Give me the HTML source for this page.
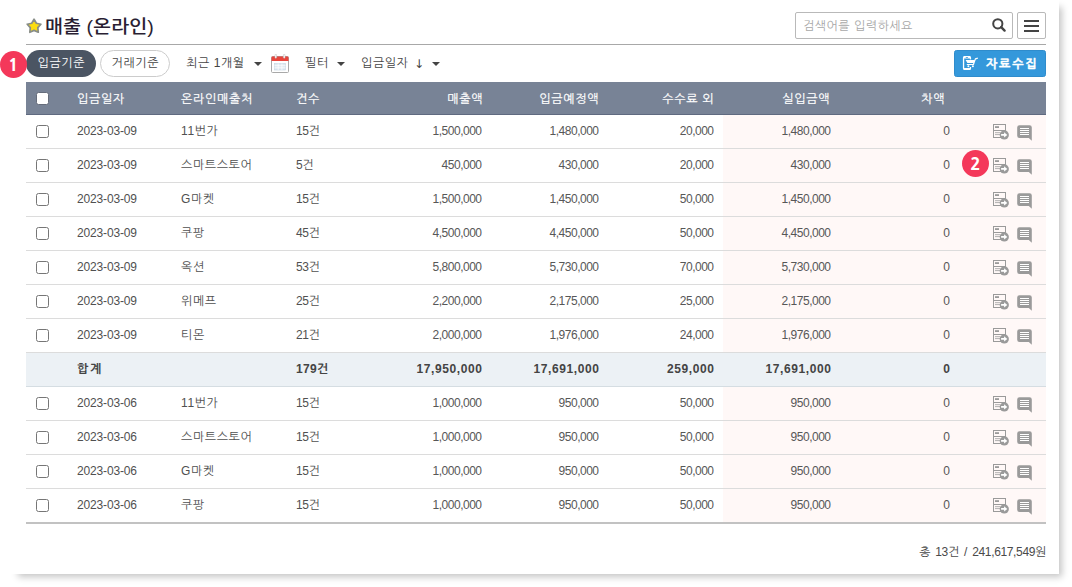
<!DOCTYPE html>
<html lang="ko"><head><meta charset="utf-8"><title>매출 (온라인)</title>
<style>
*{box-sizing:border-box;margin:0;padding:0}
html,body{width:1072px;height:587px;overflow:hidden;background:#fff}
body{position:relative;font-family:"Liberation Sans","NanumGothic",sans-serif;font-size:12px;color:#444}
.shade{position:absolute;left:15px;top:4px;width:1044px;height:570px;background:#fff;box-shadow:3px 3px 7px rgba(0,0,0,.23)}
.card{position:absolute;left:0;top:0;width:1059px;height:574px;background:#fff}
.abs{position:absolute}
.title{position:absolute;left:45px;top:15px;height:24px;line-height:24px;font-size:18px;font-weight:500;color:#2a1f33;white-space:nowrap;transform:scaleX(1.09);transform-origin:0 0;font-family:"Liberation Sans","Noto Sans CJK KR",sans-serif}
.star{position:absolute;left:25px;top:17px}
.search{position:absolute;left:795px;top:12px;width:218px;height:27px;border:1px solid #b9b9b9;border-radius:2px;background:#fff}
.search span{letter-spacing:.5px;position:absolute;left:7px;top:0;line-height:27px;color:#a8a8a8;font-size:12px;white-space:nowrap}
.search svg{position:absolute;left:195px;top:4px}
.menu{position:absolute;left:1017px;top:12px;width:29px;height:27px;border:1px solid #b9b9b9;border-radius:2px;background:#fff}
.menu i{position:absolute;left:6px;width:15px;height:2px;background:#444}
.hr{position:absolute;left:26px;top:44px;width:1020px;height:1px;background:#a8a8a8}
.pill{position:absolute;top:50px;height:27px;line-height:26px;border-radius:14px;text-align:center;font-size:12px;white-space:nowrap;letter-spacing:.6px;text-indent:.6px}
.p1{left:26px;width:70px;background:#4b5563;color:#fff}
.p2{left:100px;width:70px;background:#fff;color:#444;border:1px solid #ccc;line-height:24px}
.tl{position:absolute;top:50px;height:27px;line-height:27px;font-size:12px;color:#444;white-space:nowrap;letter-spacing:.6px}
.caret{position:absolute;top:62px;width:0;height:0;border-left:4px solid transparent;border-right:4px solid transparent;border-top:4px solid #444}
.cal{position:absolute;left:271px;top:54px}
.btn{position:absolute;left:954px;top:50px;width:92px;height:27px;border-radius:2.5px;background:#3498db;border:1px solid #2f8ccc;color:#fff}
.btn span{position:absolute;left:31px;top:0;line-height:27px;-webkit-text-stroke:.35px #fff;font-weight:bold;font-size:12px;white-space:nowrap;letter-spacing:1.8px}
.btn svg{position:absolute;left:7px;top:4px}
.thead{position:absolute;left:26px;top:82px;width:1020px;height:33px;background:#788396;border-bottom:1px solid #5f6a80;color:#fff}
.thead span{position:absolute;top:0;line-height:35px;font-size:12px;white-space:nowrap;letter-spacing:.7px;margin-right:-1.2px;-webkit-text-stroke:.2px #fff}
.thead .hcb{position:absolute;left:10px;top:10px;width:13px;height:13px;background:#fff;border:1px solid #656c7b;border-radius:2.5px}
.tbody{position:absolute;left:26px;top:0;width:1020px}
.row{position:absolute;left:0;width:1020px;height:34px;border-bottom:1px solid #dcdcdc;line-height:33px;white-space:nowrap;color:#505050}
.row span{position:absolute;top:0}
.row .pk{position:absolute;left:697px;top:0;width:323px;height:33px;background:#fff8f7}
.row .cb{position:absolute;left:10px;top:10px;width:13px;height:13px;border:1px solid #767676;border-radius:2.5px;background:#fff}
.c1{left:51px}.c2{left:155px}.c3{left:270px}
.n{color:#575757;text-align:right;width:120px;letter-spacing:-.5px;margin-left:-.5px}
.c2{letter-spacing:.6px}
.c1{letter-spacing:-.15px}
.n4{left:336px}.n5{left:453px}.n6{left:568px}.n7{left:685px}.n8{left:804px}
.tot{background:#ecf1f5;font-weight:bold;color:#444;border-bottom:1px solid #d5dde2;border-top:0}
.tot .n{color:#444;letter-spacing:.6px;margin-left:.6px}
.tot .c1{letter-spacing:1.6px}
.tot .c3{letter-spacing:.3px}
.c3{letter-spacing:-.4px}
.ic1{position:absolute;left:967px;top:9px}
.ic2{position:absolute;left:991px;top:10px}
.tend{position:absolute;left:26px;top:522px;width:1020px;height:2px;background:#c2c2c2}
.foot{position:absolute;right:26px;top:540px;line-height:24px;font-size:12px;color:#4a4a4a;white-space:nowrap;letter-spacing:-.35px;word-spacing:2.2px}
.badge{position:absolute;width:27px;height:27px;border-radius:50%;background:#f4385a;color:#fff;font-weight:800;font-size:17px;line-height:27px;text-align:center;font-family:"NanumGothic","Liberation Sans",sans-serif}
.b1{left:0px;top:50.5px}
.b2{left:962px;top:149.5px}

</style></head><body>
<div class="shade"></div><div class="card"></div>
<svg class="star" width="18" height="18" viewBox="0 0 18 18"><path d="M9.05 2.25L11.37 6.25L15.90 7.23L12.81 10.67L13.28 15.27L9.05 13.40L4.82 15.27L5.29 10.67L2.20 7.23L6.73 6.25z" fill="#fbdd12" stroke="#898e88" stroke-width="1.7" stroke-linejoin="round"/></svg>
<div class="title">매출 (온라인)</div>
<div class="search"><span>검색어를 입력하세요</span><svg width="18" height="18" viewBox="0 0 18 18"><circle cx="6.8" cy="6.8" r="4.6" fill="none" stroke="#444" stroke-width="2"/><line x1="10.2" y1="10.2" x2="13.6" y2="13.6" stroke="#444" stroke-width="2.4" stroke-linecap="round"/></svg></div>
<div class="menu"><i style="top:7px"></i><i style="top:12px"></i><i style="top:17px"></i></div>
<div class="hr"></div>
<div class="pill p1">입금기준</div>
<div class="pill p2">거래기준</div>
<div class="tl" style="left:186px">최근 1개월</div><i class="caret" style="left:253.5px"></i>
<svg class="cal" width="18" height="19" viewBox="0 0 18 19"><rect x="0.5" y="2.5" width="17" height="16" rx="1" fill="#fff" stroke="#a9a9a9"/><path d="M0.5 3.5a1 1 0 0 1 1-1h15a1 1 0 0 1 1 1v3.5h-17z" fill="#e8453c"/><rect x="4" y="0.3" width="1.6" height="4" rx=".8" fill="#fff" stroke="#b9b9b9" stroke-width=".5"/><rect x="12.4" y="0.3" width="1.6" height="4" rx=".8" fill="#fff" stroke="#b9b9b9" stroke-width=".5"/><rect x="3.5" y="9.5" width="11" height="6.5" fill="#dfe9f1" stroke="#c3d3df" stroke-width=".6"/><path d="M3.5 11.7h11M3.5 13.8h11M7.2 9.5v6.5M10.9 9.5v6.5" stroke="#fff" stroke-width=".7"/></svg>
<div class="tl" style="left:305px">필터</div><i class="caret" style="left:336.5px"></i>
<div class="tl" style="left:361px">입금일자</div><div class="tl" style="left:414px;font-family:'DejaVu Sans',sans-serif;font-size:12px;line-height:28px">↓</div><i class="caret" style="left:431.5px"></i>
<div class="btn"><svg width="17" height="16" viewBox="0 0 17 16"><rect x="1.55" y="1.55" width="6.9" height="12.9" rx="1.3" fill="none" stroke="#fff" stroke-width="1.3"/><rect x="1.5" y="1" width="7" height="2.6" rx="1" fill="#fff"/><rect x="1.5" y="13" width="7" height="2" rx="1" fill="#fff"/><rect x="3.6" y="1.9" width="2.6" height=".8" rx=".4" fill="#3498db"/><rect x="7" y="4.4" width="3" height="7.6" fill="#3498db"/><path d="M3.6 4.9h9.4l-1.3 3.1H5.4z" fill="#fff"/><path d="M4.8 9.5h6.6l2-5.6 2.4-.8" fill="none" stroke="#fff" stroke-width="1.2" stroke-linejoin="round"/><circle cx="6.4" cy="11.3" r="1" fill="#fff"/><circle cx="10.9" cy="11.3" r="1" fill="#fff"/></svg><span>자료수집</span></div>
<div class="thead"><i class="hcb"></i><span style="left:51px">입금일자</span><span style="left:155px">온라인매출처</span><span style="left:270px">건수</span><span style="right:564px">매출액</span><span style="right:448px">입금예정액</span><span style="right:333px">수수료 외</span><span style="right:217px">실입금액</span><span style="right:102px">차액</span></div>

<div class="tbody">
<div class="row" style="top:115px"><i class="pk"></i><i class="cb"></i><span class="c1">2023-03-09</span><span class="c2">11번가</span><span class="c3">15건</span><span class="n n4">1,500,000</span><span class="n n5">1,480,000</span><span class="n n6">20,000</span><span class="n n7">1,480,000</span><span class="n n8">0</span><svg class="ic1" width="17" height="17" viewBox="0 0 17 17"><rect x="0.5" y="0.5" width="12" height="13" fill="none" stroke="#9a9a9a"/><line x1="0" y1="6.5" x2="13" y2="6.5" stroke="#9a9a9a"/><rect x="2" y="2.2" width="4" height="1.8" fill="#9a9a9a"/><line x1="2" y1="8.7" x2="7.5" y2="8.7" stroke="#a8a8a8" stroke-width=".9"/><line x1="2" y1="10.6" x2="7" y2="10.6" stroke="#a8a8a8" stroke-width=".9"/><circle cx="11.3" cy="10.9" r="4.6" fill="#9a9a9a"/><path d="M8.1 10h3V8.2l3.2 2.7-3.2 2.7v-1.8h-3z" fill="#fff"/></svg><svg class="ic2" width="16" height="17" viewBox="0 0 16 17"><path d="M2.5 0.2h10a2.3 2.3 0 0 1 2.3 2.3v13.3l-3-2.8H2.5a2.3 2.3 0 0 1-2.3-2.3V2.5A2.3 2.3 0 0 1 2.5 0.2z" fill="#9a9a9a"/><g stroke="#fff" stroke-width="1"><line x1="3" y1="3.5" x2="12" y2="3.5"/><line x1="3" y1="5.5" x2="12" y2="5.5"/><line x1="3" y1="7.5" x2="12" y2="7.5"/><line x1="3" y1="9.5" x2="12" y2="9.5"/></g></svg></div>
<div class="row" style="top:149px"><i class="pk"></i><i class="cb"></i><span class="c1">2023-03-09</span><span class="c2">스마트스토어</span><span class="c3">5건</span><span class="n n4">450,000</span><span class="n n5">430,000</span><span class="n n6">20,000</span><span class="n n7">430,000</span><span class="n n8">0</span><svg class="ic1" width="17" height="17" viewBox="0 0 17 17"><rect x="0.5" y="0.5" width="12" height="13" fill="none" stroke="#9a9a9a"/><line x1="0" y1="6.5" x2="13" y2="6.5" stroke="#9a9a9a"/><rect x="2" y="2.2" width="4" height="1.8" fill="#9a9a9a"/><line x1="2" y1="8.7" x2="7.5" y2="8.7" stroke="#a8a8a8" stroke-width=".9"/><line x1="2" y1="10.6" x2="7" y2="10.6" stroke="#a8a8a8" stroke-width=".9"/><circle cx="11.3" cy="10.9" r="4.6" fill="#9a9a9a"/><path d="M8.1 10h3V8.2l3.2 2.7-3.2 2.7v-1.8h-3z" fill="#fff"/></svg><svg class="ic2" width="16" height="17" viewBox="0 0 16 17"><path d="M2.5 0.2h10a2.3 2.3 0 0 1 2.3 2.3v13.3l-3-2.8H2.5a2.3 2.3 0 0 1-2.3-2.3V2.5A2.3 2.3 0 0 1 2.5 0.2z" fill="#9a9a9a"/><g stroke="#fff" stroke-width="1"><line x1="3" y1="3.5" x2="12" y2="3.5"/><line x1="3" y1="5.5" x2="12" y2="5.5"/><line x1="3" y1="7.5" x2="12" y2="7.5"/><line x1="3" y1="9.5" x2="12" y2="9.5"/></g></svg></div>
<div class="row" style="top:183px"><i class="pk"></i><i class="cb"></i><span class="c1">2023-03-09</span><span class="c2">G마켓</span><span class="c3">15건</span><span class="n n4">1,500,000</span><span class="n n5">1,450,000</span><span class="n n6">50,000</span><span class="n n7">1,450,000</span><span class="n n8">0</span><svg class="ic1" width="17" height="17" viewBox="0 0 17 17"><rect x="0.5" y="0.5" width="12" height="13" fill="none" stroke="#9a9a9a"/><line x1="0" y1="6.5" x2="13" y2="6.5" stroke="#9a9a9a"/><rect x="2" y="2.2" width="4" height="1.8" fill="#9a9a9a"/><line x1="2" y1="8.7" x2="7.5" y2="8.7" stroke="#a8a8a8" stroke-width=".9"/><line x1="2" y1="10.6" x2="7" y2="10.6" stroke="#a8a8a8" stroke-width=".9"/><circle cx="11.3" cy="10.9" r="4.6" fill="#9a9a9a"/><path d="M8.1 10h3V8.2l3.2 2.7-3.2 2.7v-1.8h-3z" fill="#fff"/></svg><svg class="ic2" width="16" height="17" viewBox="0 0 16 17"><path d="M2.5 0.2h10a2.3 2.3 0 0 1 2.3 2.3v13.3l-3-2.8H2.5a2.3 2.3 0 0 1-2.3-2.3V2.5A2.3 2.3 0 0 1 2.5 0.2z" fill="#9a9a9a"/><g stroke="#fff" stroke-width="1"><line x1="3" y1="3.5" x2="12" y2="3.5"/><line x1="3" y1="5.5" x2="12" y2="5.5"/><line x1="3" y1="7.5" x2="12" y2="7.5"/><line x1="3" y1="9.5" x2="12" y2="9.5"/></g></svg></div>
<div class="row" style="top:217px"><i class="pk"></i><i class="cb"></i><span class="c1">2023-03-09</span><span class="c2">쿠팡</span><span class="c3">45건</span><span class="n n4">4,500,000</span><span class="n n5">4,450,000</span><span class="n n6">50,000</span><span class="n n7">4,450,000</span><span class="n n8">0</span><svg class="ic1" width="17" height="17" viewBox="0 0 17 17"><rect x="0.5" y="0.5" width="12" height="13" fill="none" stroke="#9a9a9a"/><line x1="0" y1="6.5" x2="13" y2="6.5" stroke="#9a9a9a"/><rect x="2" y="2.2" width="4" height="1.8" fill="#9a9a9a"/><line x1="2" y1="8.7" x2="7.5" y2="8.7" stroke="#a8a8a8" stroke-width=".9"/><line x1="2" y1="10.6" x2="7" y2="10.6" stroke="#a8a8a8" stroke-width=".9"/><circle cx="11.3" cy="10.9" r="4.6" fill="#9a9a9a"/><path d="M8.1 10h3V8.2l3.2 2.7-3.2 2.7v-1.8h-3z" fill="#fff"/></svg><svg class="ic2" width="16" height="17" viewBox="0 0 16 17"><path d="M2.5 0.2h10a2.3 2.3 0 0 1 2.3 2.3v13.3l-3-2.8H2.5a2.3 2.3 0 0 1-2.3-2.3V2.5A2.3 2.3 0 0 1 2.5 0.2z" fill="#9a9a9a"/><g stroke="#fff" stroke-width="1"><line x1="3" y1="3.5" x2="12" y2="3.5"/><line x1="3" y1="5.5" x2="12" y2="5.5"/><line x1="3" y1="7.5" x2="12" y2="7.5"/><line x1="3" y1="9.5" x2="12" y2="9.5"/></g></svg></div>
<div class="row" style="top:251px"><i class="pk"></i><i class="cb"></i><span class="c1">2023-03-09</span><span class="c2">옥션</span><span class="c3">53건</span><span class="n n4">5,800,000</span><span class="n n5">5,730,000</span><span class="n n6">70,000</span><span class="n n7">5,730,000</span><span class="n n8">0</span><svg class="ic1" width="17" height="17" viewBox="0 0 17 17"><rect x="0.5" y="0.5" width="12" height="13" fill="none" stroke="#9a9a9a"/><line x1="0" y1="6.5" x2="13" y2="6.5" stroke="#9a9a9a"/><rect x="2" y="2.2" width="4" height="1.8" fill="#9a9a9a"/><line x1="2" y1="8.7" x2="7.5" y2="8.7" stroke="#a8a8a8" stroke-width=".9"/><line x1="2" y1="10.6" x2="7" y2="10.6" stroke="#a8a8a8" stroke-width=".9"/><circle cx="11.3" cy="10.9" r="4.6" fill="#9a9a9a"/><path d="M8.1 10h3V8.2l3.2 2.7-3.2 2.7v-1.8h-3z" fill="#fff"/></svg><svg class="ic2" width="16" height="17" viewBox="0 0 16 17"><path d="M2.5 0.2h10a2.3 2.3 0 0 1 2.3 2.3v13.3l-3-2.8H2.5a2.3 2.3 0 0 1-2.3-2.3V2.5A2.3 2.3 0 0 1 2.5 0.2z" fill="#9a9a9a"/><g stroke="#fff" stroke-width="1"><line x1="3" y1="3.5" x2="12" y2="3.5"/><line x1="3" y1="5.5" x2="12" y2="5.5"/><line x1="3" y1="7.5" x2="12" y2="7.5"/><line x1="3" y1="9.5" x2="12" y2="9.5"/></g></svg></div>
<div class="row" style="top:285px"><i class="pk"></i><i class="cb"></i><span class="c1">2023-03-09</span><span class="c2">위메프</span><span class="c3">25건</span><span class="n n4">2,200,000</span><span class="n n5">2,175,000</span><span class="n n6">25,000</span><span class="n n7">2,175,000</span><span class="n n8">0</span><svg class="ic1" width="17" height="17" viewBox="0 0 17 17"><rect x="0.5" y="0.5" width="12" height="13" fill="none" stroke="#9a9a9a"/><line x1="0" y1="6.5" x2="13" y2="6.5" stroke="#9a9a9a"/><rect x="2" y="2.2" width="4" height="1.8" fill="#9a9a9a"/><line x1="2" y1="8.7" x2="7.5" y2="8.7" stroke="#a8a8a8" stroke-width=".9"/><line x1="2" y1="10.6" x2="7" y2="10.6" stroke="#a8a8a8" stroke-width=".9"/><circle cx="11.3" cy="10.9" r="4.6" fill="#9a9a9a"/><path d="M8.1 10h3V8.2l3.2 2.7-3.2 2.7v-1.8h-3z" fill="#fff"/></svg><svg class="ic2" width="16" height="17" viewBox="0 0 16 17"><path d="M2.5 0.2h10a2.3 2.3 0 0 1 2.3 2.3v13.3l-3-2.8H2.5a2.3 2.3 0 0 1-2.3-2.3V2.5A2.3 2.3 0 0 1 2.5 0.2z" fill="#9a9a9a"/><g stroke="#fff" stroke-width="1"><line x1="3" y1="3.5" x2="12" y2="3.5"/><line x1="3" y1="5.5" x2="12" y2="5.5"/><line x1="3" y1="7.5" x2="12" y2="7.5"/><line x1="3" y1="9.5" x2="12" y2="9.5"/></g></svg></div>
<div class="row" style="top:319px"><i class="pk"></i><i class="cb"></i><span class="c1">2023-03-09</span><span class="c2">티몬</span><span class="c3">21건</span><span class="n n4">2,000,000</span><span class="n n5">1,976,000</span><span class="n n6">24,000</span><span class="n n7">1,976,000</span><span class="n n8">0</span><svg class="ic1" width="17" height="17" viewBox="0 0 17 17"><rect x="0.5" y="0.5" width="12" height="13" fill="none" stroke="#9a9a9a"/><line x1="0" y1="6.5" x2="13" y2="6.5" stroke="#9a9a9a"/><rect x="2" y="2.2" width="4" height="1.8" fill="#9a9a9a"/><line x1="2" y1="8.7" x2="7.5" y2="8.7" stroke="#a8a8a8" stroke-width=".9"/><line x1="2" y1="10.6" x2="7" y2="10.6" stroke="#a8a8a8" stroke-width=".9"/><circle cx="11.3" cy="10.9" r="4.6" fill="#9a9a9a"/><path d="M8.1 10h3V8.2l3.2 2.7-3.2 2.7v-1.8h-3z" fill="#fff"/></svg><svg class="ic2" width="16" height="17" viewBox="0 0 16 17"><path d="M2.5 0.2h10a2.3 2.3 0 0 1 2.3 2.3v13.3l-3-2.8H2.5a2.3 2.3 0 0 1-2.3-2.3V2.5A2.3 2.3 0 0 1 2.5 0.2z" fill="#9a9a9a"/><g stroke="#fff" stroke-width="1"><line x1="3" y1="3.5" x2="12" y2="3.5"/><line x1="3" y1="5.5" x2="12" y2="5.5"/><line x1="3" y1="7.5" x2="12" y2="7.5"/><line x1="3" y1="9.5" x2="12" y2="9.5"/></g></svg></div>
<div class="row tot" style="top:353px"><span class="c1">합계</span><span class="c3">179건</span><span class="n n4">17,950,000</span><span class="n n5">17,691,000</span><span class="n n6">259,000</span><span class="n n7">17,691,000</span><span class="n n8">0</span></div>
<div class="row" style="top:387px"><i class="pk"></i><i class="cb"></i><span class="c1">2023-03-06</span><span class="c2">11번가</span><span class="c3">15건</span><span class="n n4">1,000,000</span><span class="n n5">950,000</span><span class="n n6">50,000</span><span class="n n7">950,000</span><span class="n n8">0</span><svg class="ic1" width="17" height="17" viewBox="0 0 17 17"><rect x="0.5" y="0.5" width="12" height="13" fill="none" stroke="#9a9a9a"/><line x1="0" y1="6.5" x2="13" y2="6.5" stroke="#9a9a9a"/><rect x="2" y="2.2" width="4" height="1.8" fill="#9a9a9a"/><line x1="2" y1="8.7" x2="7.5" y2="8.7" stroke="#a8a8a8" stroke-width=".9"/><line x1="2" y1="10.6" x2="7" y2="10.6" stroke="#a8a8a8" stroke-width=".9"/><circle cx="11.3" cy="10.9" r="4.6" fill="#9a9a9a"/><path d="M8.1 10h3V8.2l3.2 2.7-3.2 2.7v-1.8h-3z" fill="#fff"/></svg><svg class="ic2" width="16" height="17" viewBox="0 0 16 17"><path d="M2.5 0.2h10a2.3 2.3 0 0 1 2.3 2.3v13.3l-3-2.8H2.5a2.3 2.3 0 0 1-2.3-2.3V2.5A2.3 2.3 0 0 1 2.5 0.2z" fill="#9a9a9a"/><g stroke="#fff" stroke-width="1"><line x1="3" y1="3.5" x2="12" y2="3.5"/><line x1="3" y1="5.5" x2="12" y2="5.5"/><line x1="3" y1="7.5" x2="12" y2="7.5"/><line x1="3" y1="9.5" x2="12" y2="9.5"/></g></svg></div>
<div class="row" style="top:421px"><i class="pk"></i><i class="cb"></i><span class="c1">2023-03-06</span><span class="c2">스마트스토어</span><span class="c3">15건</span><span class="n n4">1,000,000</span><span class="n n5">950,000</span><span class="n n6">50,000</span><span class="n n7">950,000</span><span class="n n8">0</span><svg class="ic1" width="17" height="17" viewBox="0 0 17 17"><rect x="0.5" y="0.5" width="12" height="13" fill="none" stroke="#9a9a9a"/><line x1="0" y1="6.5" x2="13" y2="6.5" stroke="#9a9a9a"/><rect x="2" y="2.2" width="4" height="1.8" fill="#9a9a9a"/><line x1="2" y1="8.7" x2="7.5" y2="8.7" stroke="#a8a8a8" stroke-width=".9"/><line x1="2" y1="10.6" x2="7" y2="10.6" stroke="#a8a8a8" stroke-width=".9"/><circle cx="11.3" cy="10.9" r="4.6" fill="#9a9a9a"/><path d="M8.1 10h3V8.2l3.2 2.7-3.2 2.7v-1.8h-3z" fill="#fff"/></svg><svg class="ic2" width="16" height="17" viewBox="0 0 16 17"><path d="M2.5 0.2h10a2.3 2.3 0 0 1 2.3 2.3v13.3l-3-2.8H2.5a2.3 2.3 0 0 1-2.3-2.3V2.5A2.3 2.3 0 0 1 2.5 0.2z" fill="#9a9a9a"/><g stroke="#fff" stroke-width="1"><line x1="3" y1="3.5" x2="12" y2="3.5"/><line x1="3" y1="5.5" x2="12" y2="5.5"/><line x1="3" y1="7.5" x2="12" y2="7.5"/><line x1="3" y1="9.5" x2="12" y2="9.5"/></g></svg></div>
<div class="row" style="top:455px"><i class="pk"></i><i class="cb"></i><span class="c1">2023-03-06</span><span class="c2">G마켓</span><span class="c3">15건</span><span class="n n4">1,000,000</span><span class="n n5">950,000</span><span class="n n6">50,000</span><span class="n n7">950,000</span><span class="n n8">0</span><svg class="ic1" width="17" height="17" viewBox="0 0 17 17"><rect x="0.5" y="0.5" width="12" height="13" fill="none" stroke="#9a9a9a"/><line x1="0" y1="6.5" x2="13" y2="6.5" stroke="#9a9a9a"/><rect x="2" y="2.2" width="4" height="1.8" fill="#9a9a9a"/><line x1="2" y1="8.7" x2="7.5" y2="8.7" stroke="#a8a8a8" stroke-width=".9"/><line x1="2" y1="10.6" x2="7" y2="10.6" stroke="#a8a8a8" stroke-width=".9"/><circle cx="11.3" cy="10.9" r="4.6" fill="#9a9a9a"/><path d="M8.1 10h3V8.2l3.2 2.7-3.2 2.7v-1.8h-3z" fill="#fff"/></svg><svg class="ic2" width="16" height="17" viewBox="0 0 16 17"><path d="M2.5 0.2h10a2.3 2.3 0 0 1 2.3 2.3v13.3l-3-2.8H2.5a2.3 2.3 0 0 1-2.3-2.3V2.5A2.3 2.3 0 0 1 2.5 0.2z" fill="#9a9a9a"/><g stroke="#fff" stroke-width="1"><line x1="3" y1="3.5" x2="12" y2="3.5"/><line x1="3" y1="5.5" x2="12" y2="5.5"/><line x1="3" y1="7.5" x2="12" y2="7.5"/><line x1="3" y1="9.5" x2="12" y2="9.5"/></g></svg></div>
<div class="row" style="top:489px"><i class="pk"></i><i class="cb"></i><span class="c1">2023-03-06</span><span class="c2">쿠팡</span><span class="c3">15건</span><span class="n n4">1,000,000</span><span class="n n5">950,000</span><span class="n n6">50,000</span><span class="n n7">950,000</span><span class="n n8">0</span><svg class="ic1" width="17" height="17" viewBox="0 0 17 17"><rect x="0.5" y="0.5" width="12" height="13" fill="none" stroke="#9a9a9a"/><line x1="0" y1="6.5" x2="13" y2="6.5" stroke="#9a9a9a"/><rect x="2" y="2.2" width="4" height="1.8" fill="#9a9a9a"/><line x1="2" y1="8.7" x2="7.5" y2="8.7" stroke="#a8a8a8" stroke-width=".9"/><line x1="2" y1="10.6" x2="7" y2="10.6" stroke="#a8a8a8" stroke-width=".9"/><circle cx="11.3" cy="10.9" r="4.6" fill="#9a9a9a"/><path d="M8.1 10h3V8.2l3.2 2.7-3.2 2.7v-1.8h-3z" fill="#fff"/></svg><svg class="ic2" width="16" height="17" viewBox="0 0 16 17"><path d="M2.5 0.2h10a2.3 2.3 0 0 1 2.3 2.3v13.3l-3-2.8H2.5a2.3 2.3 0 0 1-2.3-2.3V2.5A2.3 2.3 0 0 1 2.5 0.2z" fill="#9a9a9a"/><g stroke="#fff" stroke-width="1"><line x1="3" y1="3.5" x2="12" y2="3.5"/><line x1="3" y1="5.5" x2="12" y2="5.5"/><line x1="3" y1="7.5" x2="12" y2="7.5"/><line x1="3" y1="9.5" x2="12" y2="9.5"/></g></svg></div>
</div>
<div class="tend"></div>
<div class="foot">총 13건 / 241,617,549원</div>
<div class="badge b1">1</div>
<div class="badge b2">2</div>
</body></html>
